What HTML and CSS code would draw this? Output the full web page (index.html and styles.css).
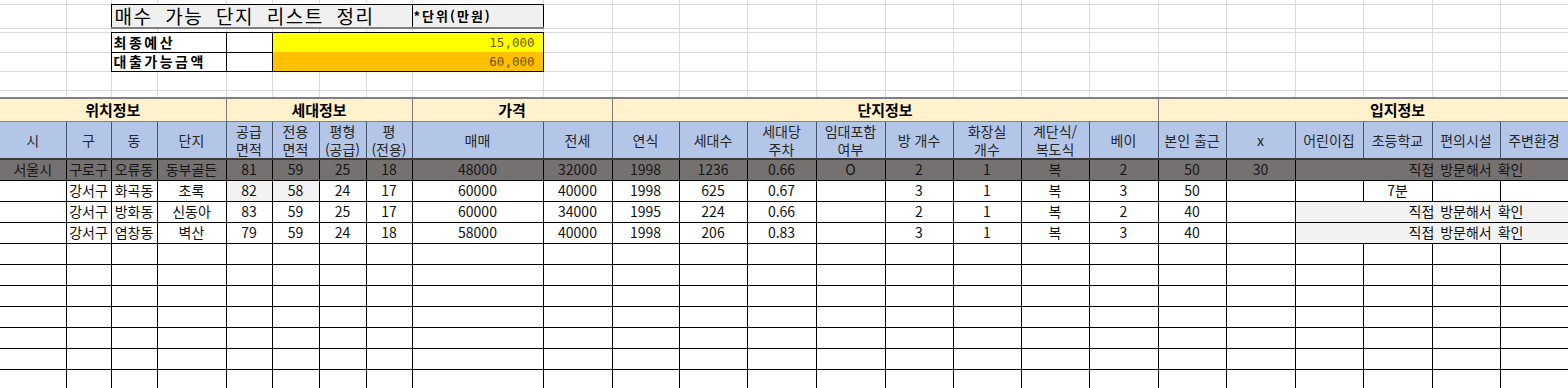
FILE: index.html
```html
<!DOCTYPE html>
<html lang="ko">
<head>
<meta charset="utf-8">
<title>매수 가능 단지 리스트 정리</title>
<link rel="stylesheet" href="styles.css">
</head>
<body>
<table class="sheet">
<colgroup>
<col class="w66"><col class="w45"><col class="w46"><col class="w69"><col class="w46"><col class="w47"><col class="w47"><col class="w46"><col class="w131"><col class="w69">
<col class="w67"><col class="w68"><col class="w69"><col class="w69"><col class="w68"><col class="w68"><col class="w68"><col class="w69">
<col class="w68"><col class="w69"><col class="w68"><col class="w69"><col class="w68"><col class="w68"><col class="w69">
</colgroup>
<tbody>
<tr class="r0"><td></td><td></td><td></td><td></td><td></td><td></td><td></td><td></td><td></td><td></td><td></td><td></td><td></td><td></td><td></td><td></td><td></td><td></td><td></td><td></td><td></td><td></td><td></td><td></td><td></td></tr>
<tr class="r1"><td></td><td></td><td class="title" colspan="6">매수 가능 단지 리스트 정리</td><td class="unit">*단위(만원)</td><td></td><td></td><td></td><td></td><td></td><td></td><td></td><td></td><td></td><td></td><td></td><td></td><td></td><td></td><td></td><td></td></tr>
<tr class="r2"><td></td><td></td><td></td><td></td><td></td><td></td><td></td><td></td><td></td><td></td><td></td><td></td><td></td><td></td><td></td><td></td><td></td><td></td><td></td><td></td><td></td><td></td><td></td><td></td><td></td></tr>
<tr class="r3"><td></td><td></td><td class="lbl" colspan="2">최종예산</td><td class="box"></td><td class="amt yel" colspan="4">15,000</td><td></td><td></td><td></td><td></td><td></td><td></td><td></td><td></td><td></td><td></td><td></td><td></td><td></td><td></td><td></td><td></td></tr>
<tr class="r4"><td></td><td></td><td class="lbl" colspan="2">대출가능금액</td><td class="box"></td><td class="amt org" colspan="4">60,000</td><td></td><td></td><td></td><td></td><td></td><td></td><td></td><td></td><td></td><td></td><td></td><td></td><td></td><td></td><td></td><td></td></tr>
<tr class="r5"><td></td><td></td><td></td><td></td><td></td><td></td><td></td><td></td><td></td><td></td><td></td><td></td><td></td><td></td><td></td><td></td><td></td><td></td><td></td><td></td><td></td><td></td><td></td><td></td><td></td></tr>
<tr class="r6"><td></td><td></td><td></td><td></td><td></td><td></td><td></td><td></td><td></td><td></td><td></td><td></td><td></td><td></td><td></td><td></td><td></td><td></td><td></td><td></td><td></td><td></td><td></td><td></td><td></td></tr>
<tr class="h1"><td colspan="4">위치정보</td><td colspan="4">세대정보</td><td colspan="2">가격</td><td colspan="8">단지정보</td><td colspan="7">입지정보</td></tr>
<tr class="h2"><td>시</td><td>구</td><td>동</td><td>단지</td><td>공급<br>면적</td><td>전용<br>면적</td><td>평형<br>(공급)</td><td>평<br>(전용)</td><td>매매</td><td>전세</td><td>연식</td><td>세대수</td><td>세대당<br>주차</td><td>임대포함<br>여부</td><td>방 개수</td><td>화장실<br>개수</td><td>계단식/<br>복도식</td><td>베이</td><td>본인 출근</td><td>x</td><td>어린이집</td><td>초등학교</td><td>편의시설</td><td>주변환경</td><td></td></tr>
<tr class="d g"><td>서울시</td><td>구로구</td><td>오류동</td><td>동부골든</td><td>81</td><td>59</td><td>25</td><td>18</td><td>48000</td><td>32000</td><td>1998</td><td>1236</td><td>0.66</td><td>O</td><td>2</td><td>1</td><td>복</td><td>2</td><td>50</td><td>30</td><td class="visit" colspan="5">직접 방문해서 확인</td></tr>
<tr class="d"><td></td><td>강서구</td><td>화곡동</td><td>초록</td><td class="lg">82</td><td class="lg">58</td><td>24</td><td>17</td><td>60000</td><td>40000</td><td>1998</td><td>625</td><td>0.67</td><td></td><td>3</td><td>1</td><td>복</td><td>3</td><td>50</td><td></td><td></td><td>7분</td><td></td><td></td><td></td></tr>
<tr class="d"><td></td><td>강서구</td><td>방화동</td><td>신동아</td><td>83</td><td>59</td><td>25</td><td>17</td><td>60000</td><td>34000</td><td>1995</td><td>224</td><td>0.66</td><td></td><td>2</td><td>1</td><td>복</td><td>2</td><td>40</td><td></td><td class="visit lg" colspan="5">직접 방문해서 확인</td></tr>
<tr class="d"><td></td><td>강서구</td><td>염창동</td><td>벽산</td><td>79</td><td>59</td><td>24</td><td>18</td><td>58000</td><td>40000</td><td>1998</td><td>206</td><td>0.83</td><td></td><td>3</td><td>1</td><td>복</td><td>3</td><td>40</td><td></td><td class="visit lg" colspan="5">직접 방문해서 확인</td></tr>
<tr class="d"><td></td><td></td><td></td><td></td><td></td><td></td><td></td><td></td><td></td><td></td><td></td><td></td><td></td><td></td><td></td><td></td><td></td><td></td><td></td><td></td><td></td><td></td><td></td><td></td><td></td></tr>
<tr class="d"><td></td><td></td><td></td><td></td><td></td><td></td><td></td><td></td><td></td><td></td><td></td><td></td><td></td><td></td><td></td><td></td><td></td><td></td><td></td><td></td><td></td><td></td><td></td><td></td><td></td></tr>
<tr class="d"><td></td><td></td><td></td><td></td><td></td><td></td><td></td><td></td><td></td><td></td><td></td><td></td><td></td><td></td><td></td><td></td><td></td><td></td><td></td><td></td><td></td><td></td><td></td><td></td><td></td></tr>
<tr class="d"><td></td><td></td><td></td><td></td><td></td><td></td><td></td><td></td><td></td><td></td><td></td><td></td><td></td><td></td><td></td><td></td><td></td><td></td><td></td><td></td><td></td><td></td><td></td><td></td><td></td></tr>
<tr class="d"><td></td><td></td><td></td><td></td><td></td><td></td><td></td><td></td><td></td><td></td><td></td><td></td><td></td><td></td><td></td><td></td><td></td><td></td><td></td><td></td><td></td><td></td><td></td><td></td><td></td></tr>
<tr class="d"><td></td><td></td><td></td><td></td><td></td><td></td><td></td><td></td><td></td><td></td><td></td><td></td><td></td><td></td><td></td><td></td><td></td><td></td><td></td><td></td><td></td><td></td><td></td><td></td><td></td></tr>
<tr class="d"><td></td><td></td><td></td><td></td><td></td><td></td><td></td><td></td><td></td><td></td><td></td><td></td><td></td><td></td><td></td><td></td><td></td><td></td><td></td><td></td><td></td><td></td><td></td><td></td><td></td></tr>
</tbody>
</table>
</body>
</html>
```

FILE: styles.css
```css
* { box-sizing: border-box; }

body {
  margin: 0;
  overflow: hidden;
  background: #ffffff;
  font-family: "Noto Sans CJK KR", "Noto Sans", sans-serif;
  color: #111111;
}

.sheet {
  border-collapse: collapse;
  table-layout: fixed;
  width: 1637px;
}

.w45 { width: 45px; }
.w46 { width: 46px; }
.w47 { width: 47px; }
.w66 { width: 66px; }
.w67 { width: 67px; }
.w68 { width: 68px; }
.w69 { width: 69px; }
.w131 { width: 131px; }

.sheet td {
  padding: 0;
  border: 1px solid #dadada;
  text-align: center;
  vertical-align: middle;
  white-space: nowrap;
  overflow: hidden;
  font-size: 14px;
  line-height: 17px;
}

.r0 { height: 4px; }
.r1 { height: 24px; }
.r2 { height: 4px; }
.r3 { height: 20px; }
.r4 { height: 19px; }
.r5 { height: 19px; }
.r6 { height: 8px; }
.h1 { height: 23px; }
.h2 { height: 38px; }
.d { height: 21px; }

.sheet .r0 td,
.sheet .r2 td,
.sheet .r6 td {
  font-size: 0;
  line-height: 0;
}

.sheet .r0 td { border-top: none; }

/* title block */
.sheet td.title {
  border: 1px double #000000;
  border-bottom: 2px solid #808080;
  background: #f0f0f0;
  text-align: left;
  padding-left: 3px;
  font-size: 19px;
  line-height: 21px;
  letter-spacing: 1.5px;
  word-spacing: 6px;
  color: #000000;
  overflow: visible;
}

.sheet td.unit {
  border: 1px double #000000;
  border-bottom: 2px solid #808080;
  background: #f0f0f0;
  text-align: left;
  padding-left: 1px;
  font-size: 13px;
  font-weight: 700;
  letter-spacing: 2px;
  color: #000000;
}

.sheet td.lbl {
  border: 1px double #000000;
  text-align: left;
  padding-left: 2px;
  font-weight: 700;
  font-size: 14px;
  letter-spacing: 2.5px;
  color: #000000;
}

.sheet td.box { border: 1px double #000000; }

.sheet td.amt {
  border: 1px double #000000;
  text-align: right;
  padding-right: 8px;
  font-family: "DejaVu Sans Mono", monospace;
  font-size: 12.5px;
  color: #705400;
}

.sheet td.yel {
  background: #ffff00;
  border-bottom-style: hidden;
}

.sheet td.org { background: #ffc000; }

/* header rows */
.sheet .h1 td {
  background: #fff2cc;
  border: 1px double #7f7f7f;
  border-top: 2px solid #808080;
  font-weight: 700;
  font-size: 15px;
  color: #000000;
}

.sheet .h2 td {
  background: #b4c6e7;
  border: 1px double #44546a;
  border-bottom: 2px solid #3a3a3a;
  color: #262626;
  line-height: 18px;
}

/* data rows */
.sheet .d td {
  border: 1px double #000000;
  color: #111111;
}

.sheet .g td {
  background: #767171;
  color: #161616;
}

.sheet td.lg { background: #f2f2f2; }

.sheet td.visit { word-spacing: 2px; }

.sheet tr td:first-child { border-left-style: none; }
```
